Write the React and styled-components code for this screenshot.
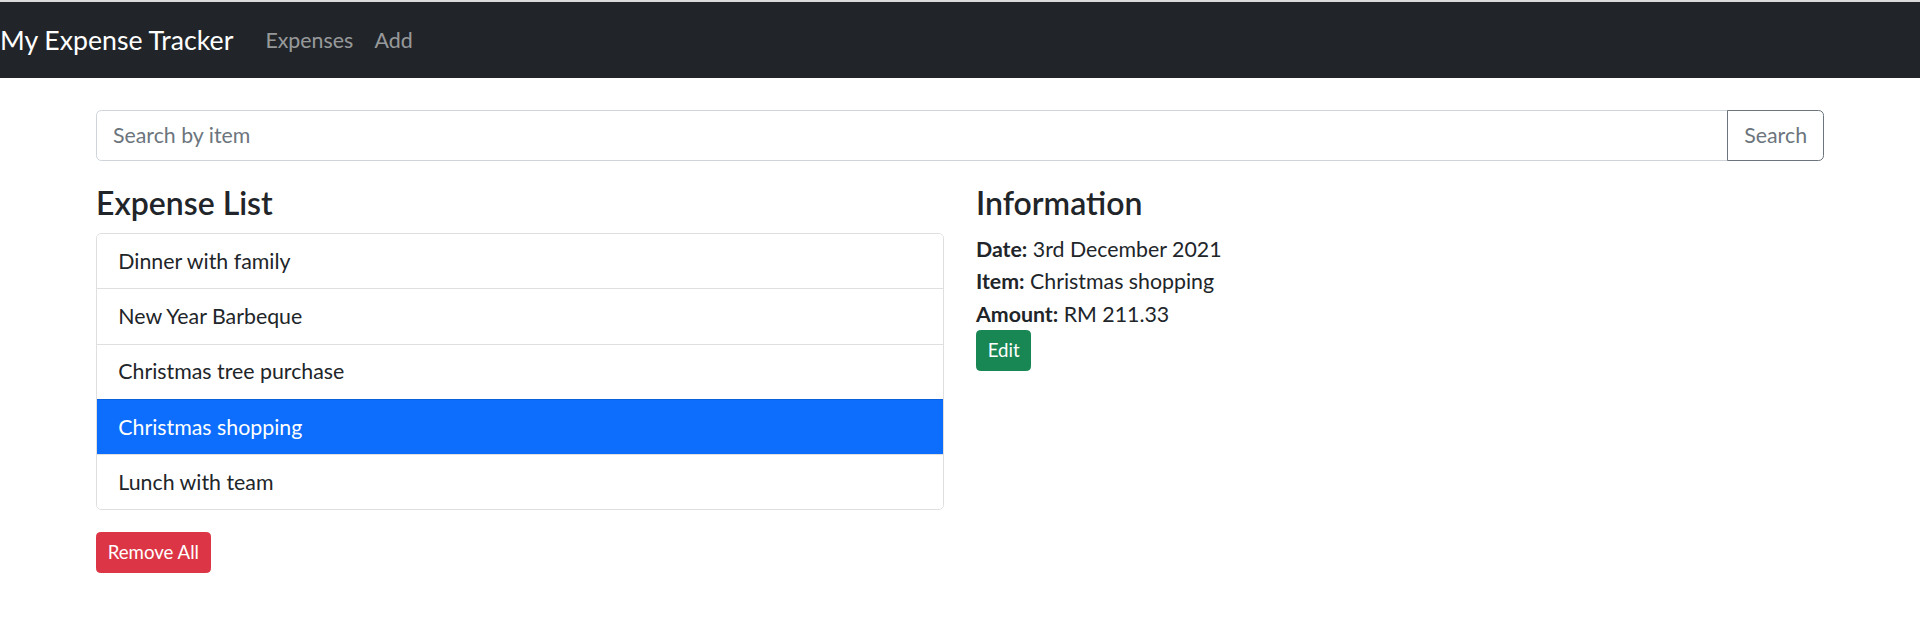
import React, { useState } from 'react';
import styled, { createGlobalStyle } from 'styled-components';

// Page is drawn at a 4/3 scale, so 1rem = 21.333px
const GlobalStyle = createGlobalStyle`
  html {
    font-size: 21.3333px;
  }
  * {
    box-sizing: border-box;
  }
  body {
    margin: 0;
    font-family: Lato, "Noto Sans", sans-serif;
    font-size: 1rem;
    line-height: 1.52;
    color: #212529;
    background: #fff;
  }
`;

const NavBar = styled.nav`
  display: flex;
  align-items: center;
  border-top: 2px solid #dadada;
  padding: calc(0.5rem + 0.5px) 0;
  background: #212529;
`;

const Brand = styled.a`
  margin-right: 1rem;
  padding: 0.3125rem 0;
  font-size: 1.25rem;
  color: #fff;
  text-decoration: none;
  white-space: nowrap;
`;

const NavLinks = styled.div`
  display: flex;
`;

const NavLink = styled.a`
  padding: 0.5rem;
  color: rgba(255, 255, 255, 0.55);
  text-decoration: none;
`;

const Container = styled.main`
  max-width: 1760px;
  margin: 1.5rem auto 0;
  padding: 0 0.75rem;
`;

const SearchGroup = styled.div`
  display: flex;
  margin-bottom: calc(1rem + 2px);
`;

const SearchInput = styled.input`
  flex: 1;
  min-width: 0;
  padding: 0.375rem 0.75rem;
  font: inherit;
  color: #212529;
  border: 1px solid #ced4da;
  border-radius: 0.25rem 0 0 0.25rem;
  outline: none;

  &::placeholder {
    color: #6c757d;
  }
`;

const SearchButton = styled.button`
  margin-left: -1px;
  padding: 0.375rem 0.75rem;
  font: inherit;
  color: #6c757d;
  background: transparent;
  border: 1px solid #6c757d;
  border-radius: 0 0.25rem 0.25rem 0;
`;

const Row = styled.div`
  display: grid;
  grid-template-columns: 1fr 1fr;
  margin: 0 -0.75rem;
`;

const Col = styled.section`
  padding: 0 0.75rem;
`;

const Heading = styled.h4`
  margin: 0 0 0.5rem;
  font-size: 1.5rem;
  font-weight: 600;
  line-height: 1.2;
`;

const ListGroup = styled.ul`
  margin: 0;
  padding: 0;
  list-style: none;
  border: 1px solid rgba(0, 0, 0, 0.125);
  border-radius: 0.25rem;
  overflow: hidden;
`;

const ListItem = styled.li`
  padding: calc(0.5rem + 0.3px) 1rem;
  cursor: pointer;
  color: ${(p) => (p.$active ? '#fff' : '#212529')};
  background: ${(p) => (p.$active ? '#0d6efd' : '#fff')};

  & + & {
    border-top: 1px solid rgba(0, 0, 0, 0.125);
  }
`;

const Button = styled.button`
  padding: 0.25rem 0.5rem;
  font: inherit;
  font-size: 0.875rem;
  line-height: 1.52;
  color: #fff;
  background: ${(p) => (p.$variant === 'danger' ? '#dc3545' : '#198754')};
  border: 1px solid ${(p) => (p.$variant === 'danger' ? '#dc3545' : '#198754')};
  border-radius: 0.2rem;
  margin-top: ${(p) => (p.$spaced ? '1rem' : '0')};
`;

const InfoLine = styled.div`
  strong {
    font-weight: 700;
  }
`;

const expenses = [
  { item: 'Dinner with family', date: '1st January 2022', amount: 'RM 150.00' },
  { item: 'New Year Barbeque', date: '31st December 2021', amount: 'RM 320.50' },
  { item: 'Christmas tree purchase', date: '20th December 2021', amount: 'RM 89.90' },
  { item: 'Christmas shopping', date: '3rd December 2021', amount: 'RM 211.33' },
  { item: 'Lunch with team', date: '25th November 2021', amount: 'RM 76.40' }
];

const App = () => {
  const [current, setCurrent] = useState(3);
  const selected = expenses[current];

  return (
    <>
      <GlobalStyle />
      <NavBar>
        <Brand href="#">My Expense Tracker</Brand>
        <NavLinks>
          <NavLink href="#">Expenses</NavLink>
          <NavLink href="#">Add</NavLink>
        </NavLinks>
      </NavBar>

      <Container>
        {/* SEARCH */}
        <SearchGroup>
          <SearchInput type="text" placeholder="Search by item" />
          <SearchButton type="button">Search</SearchButton>
        </SearchGroup>

        <Row>
          {/* LIST */}
          <Col>
            <Heading>Expense List</Heading>
            <ListGroup>
              {expenses.map((e, i) => (
                <ListItem key={e.item} $active={i === current} onClick={() => setCurrent(i)}>
                  {e.item}
                </ListItem>
              ))}
            </ListGroup>
            <Button $variant="danger" $spaced>Remove All</Button>
          </Col>

          {/* DETAILS */}
          <Col>
            <Heading>Information</Heading>
            <InfoLine><strong>Date:</strong> {selected.date}</InfoLine>
            <InfoLine><strong>Item:</strong> {selected.item}</InfoLine>
            <InfoLine><strong>Amount:</strong> {selected.amount}</InfoLine>
            <Button $variant="success">Edit</Button>
          </Col>
        </Row>
      </Container>
    </>
  );
};

export default App;
